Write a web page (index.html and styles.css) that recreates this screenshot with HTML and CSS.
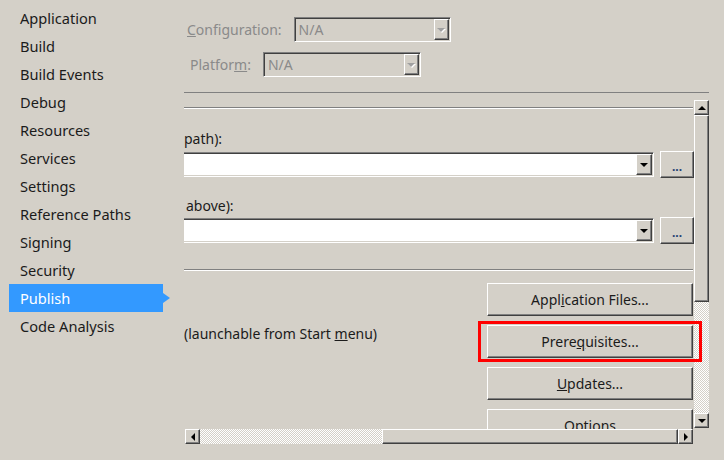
FILE: index.html
```html
<!DOCTYPE html>
<html>
<head>
  <meta charset="UTF-8">
  <title>Project Properties - Publish</title>
  <link rel="stylesheet" href="styles.css">
</head>
<body>
  <div class="page">
    <ul class="nav">
      <li>Application</li>
      <li>Build</li>
      <li>Build Events</li>
      <li>Debug</li>
      <li>Resources</li>
      <li>Services</li>
      <li>Settings</li>
      <li>Reference Paths</li>
      <li>Signing</li>
      <li>Security</li>
      <li class="active">Publish</li>
      <li>Code Analysis</li>
    </ul>

    <div class="main">
      <div class="config-row config">
        <span class="disabled-label"><u>C</u>onfiguration:</span>
        <div class="select disabled wide">
          <span>N/A</span>
          <span class="drop"><i class="arrow-down"></i></span>
        </div>
      </div>
      <div class="config-row platform">
        <span class="disabled-label">Platfor<u>m</u>:</span>
        <div class="select disabled">
          <span>N/A</span>
          <span class="drop"><i class="arrow-down"></i></span>
        </div>
      </div>

      <div class="viewport">
        <div class="separator first"></div>

        <div class="label label-path">path):</div>
        <div class="combo-row">
          <div class="combo"><span class="drop"><i class="arrow-down"></i></span></div>
          <button class="btn dots">...</button>
        </div>

        <div class="label label-above">above):</div>
        <div class="combo-row">
          <div class="combo"><span class="drop"><i class="arrow-down"></i></span></div>
          <button class="btn dots">...</button>
        </div>

        <div class="separator second"></div>

        <div class="publish-row">
          <div class="hint">(launchable from Start <u>m</u>enu)</div>
          <div class="actions">
            <button class="btn big">Appl<u>i</u>cation Files...</button>
            <button class="btn big">Prere<u>q</u>uisites...</button>
            <button class="btn big"><u>U</u>pdates...</button>
            <button class="btn big">Options</button>
          </div>
        </div>

        <div class="highlight"></div>

        <div class="vscroll">
          <span class="sb-btn"><i class="arrow-up"></i></span>
          <span class="v-thumb"></span>
          <span class="track"></span>
          <span class="sb-btn"><i class="arrow-down"></i></span>
        </div>
        <div class="hscroll">
          <span class="sb-btn"><i class="arrow-left"></i></span>
          <span class="track h-track"></span>
          <span class="h-thumb"></span>
          <span class="sb-btn"><i class="arrow-right"></i></span>
        </div>
      </div>
    </div>
  </div>
</body>
</html>
```

FILE: styles.css
```css
body {
  margin: 0;
  background: #d4d0c8;
  font-family: "Noto Sans", "Open Sans", sans-serif;
  font-size: 14px;
  color: #1b1b1b;
}
.page {
  display: flex;
  width: 724px;
  height: 460px;
  overflow: hidden;
}

/* left navigation */
.nav {
  list-style: none;
  margin: 0;
  padding: 4px 0 0 0;
  width: 184px;
  flex: none;
  font-size: 14.6px;
}
.nav li {
  height: 28px;
  line-height: 28px;
  padding-left: 20px;
}
.nav li.active {
  position: relative;
  margin-left: 9px;
  padding-left: 11px;
  width: 143px;
  background: #3399ff;
  color: #fff;
}
.nav li.active::after {
  content: "";
  position: absolute;
  right: -7px;
  top: 9px;
  border-left: 7px solid #3399ff;
  border-top: 5px solid transparent;
  border-bottom: 5px solid transparent;
}

/* configuration rows */
.main {
  flex: 1;
  padding-top: 17px;
}
.config-row {
  display: flex;
  align-items: center;
  gap: 12px;
  height: 25px;
}
.config {
  margin-left: 3px;
}
.platform {
  margin-left: 6px;
  margin-top: 10px;
}
.disabled-label {
  color: #8a8a8a;
}
.select {
  position: relative;
  box-sizing: border-box;
  width: 158px;
  height: 25px;
  padding: 1px 0 0 4px;
  line-height: 21px;
  border-top: 1px solid #808080;
  border-left: 1px solid #808080;
  border-right: 1px solid #fff;
  border-bottom: 1px solid #fff;
  box-shadow: inset 1px 1px #404040, inset -1px -1px #d4d0c8;
  color: #8a8a8a;
}
.select.wide {
  width: 157px;
}
.select .drop {
  position: absolute;
  right: 1px;
  top: 1px;
  bottom: 1px;
}
.select .arrow-down {
  border-top-color: #a0a0a0;
  filter: drop-shadow(1px 1px 0 #fff);
}

/* raised look shared by buttons */
.drop, .btn, .sb-btn, .v-thumb, .h-thumb {
  box-sizing: border-box;
  background: #d4d0c8;
  border-top: 1px solid #fff;
  border-left: 1px solid #fff;
  border-right: 1px solid #404040;
  border-bottom: 1px solid #404040;
  box-shadow: inset -1px -1px #808080;
}
.drop {
  display: flex;
  align-items: center;
  justify-content: center;
  width: 15px;
}

/* arrows */
.arrow-down, .arrow-up, .arrow-left, .arrow-right {
  display: block;
  width: 0;
  height: 0;
}
.arrow-down {
  border-left: 4px solid transparent;
  border-right: 4px solid transparent;
  border-top: 4px solid #000;
}
.arrow-up {
  border-left: 4px solid transparent;
  border-right: 4px solid transparent;
  border-bottom: 4px solid #000;
}
.arrow-left {
  border-top: 4px solid transparent;
  border-bottom: 4px solid transparent;
  border-right: 4px solid #000;
}
.arrow-right {
  border-top: 4px solid transparent;
  border-bottom: 4px solid transparent;
  border-left: 4px solid #000;
}

/* scroll area */
.viewport {
  position: relative;
  margin-top: 15px;
  width: 525px;
  height: 352px;
  border-top: 1px solid #808080;
  box-sizing: border-box;
  overflow: hidden;
}
.separator {
  width: 509px;
  border-top: 1px solid #808080;
  border-bottom: 1px solid #fff;
}
.separator.first {
  margin-top: 14px;
}
.separator.second {
  margin-top: 25px;
}
.label {
  height: 20px;
  line-height: 20px;
}
.label-path {
  margin-top: 20px;
}
.label-above {
  margin-top: 18px;
  padding-left: 2px;
}
.combo-row {
  display: flex;
  align-items: center;
  gap: 6px;
  height: 27px;
  margin-top: 2px;
}
.label-above + .combo-row {
  margin-top: 1px;
}
.combo {
  display: flex;
  justify-content: flex-end;
  box-sizing: border-box;
  width: 470px;
  height: 25px;
  padding: 1px 1px 1px 0;
  background: #fff;
  border-top: 1px solid #808080;
  border-right: 1px solid #fff;
  border-bottom: 1px solid #fff;
  box-shadow: inset 0 1px #404040, inset -1px -1px #d4d0c8;
}
.combo .drop {
  width: 16px;
}
.btn {
  font-family: inherit;
  font-size: 14px;
  color: #1b1b1b;
  padding: 0;
  cursor: pointer;
}
.dots {
  width: 34px;
  height: 27px;
  color: #1d3f73;
  font-size: 12px;
  font-weight: bold;
  padding-top: 4px;
}

/* bottom section */
.publish-row {
  display: flex;
  margin-top: 12px;
}
.hint {
  width: 303px;
  margin-top: 41px;
  line-height: 20px;
  height: 20px;
}
.actions {
  display: flex;
  flex-direction: column;
  gap: 9px;
}
.big {
  width: 206px;
  height: 33px;
}
.highlight {
  position: absolute;
  left: 294px;
  top: 228px;
  width: 224px;
  height: 41px;
  box-sizing: border-box;
  border: 3px solid #f00;
  z-index: 2;
}

/* scrollbars */
.vscroll, .hscroll {
  position: absolute;
  display: flex;
  z-index: 1;
}
.vscroll {
  left: 510px;
  top: 7px;
  width: 15px;
  height: 328px;
  flex-direction: column;
}
.hscroll {
  left: 1px;
  top: 336px;
  width: 508px;
  height: 15px;
}
.sb-btn {
  display: flex;
  align-items: center;
  justify-content: center;
  width: 15px;
  height: 15px;
  flex: none;
}
.track {
  flex: 1;
  background: repeating-conic-gradient(#fff 0 25%, #d4d0c8 0 50%) 0 0 / 2px 2px;
}
.v-thumb {
  height: 187px;
  flex: none;
}
.h-track {
  flex: none;
  width: 182px;
}
.h-thumb {
  flex: 1;
}
```
